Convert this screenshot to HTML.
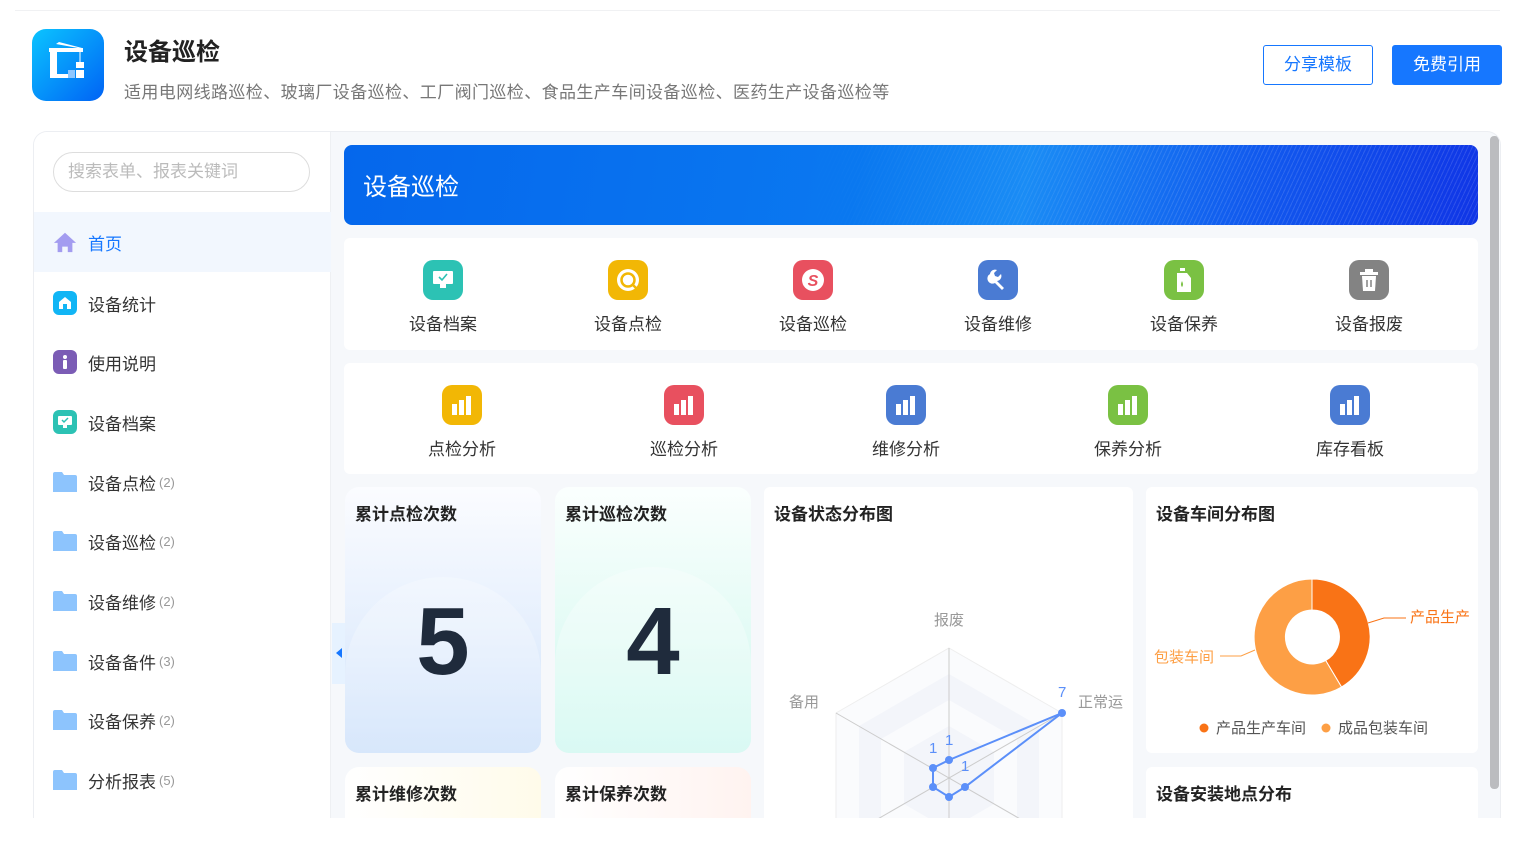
<!DOCTYPE html>
<html style="width:1528px;height:856px;overflow:hidden"><head><meta charset="utf-8"><style>
*{box-sizing:border-box;margin:0;padding:0}
body{width:1528px;height:856px;background:#fff;font-family:"Liberation Sans","Noto Sans CJK SC",sans-serif;position:relative;overflow:hidden;color:#333}
.abs{position:absolute}
.btn{position:absolute;top:45px;height:40px;width:110px;border-radius:3px;font-size:17px;text-align:center;line-height:38px}
.main{position:absolute;left:33px;top:131px;width:1468px;height:687px;border:1px solid #eceef2;border-bottom:none;border-radius:14px 14px 0 0;overflow:hidden;background:#f6f8fb}
.side{position:absolute;left:0;top:0;width:297px;height:100%;background:#fff;border-right:1px solid #eef0f3}
.item{position:absolute;left:0;width:297px;height:60px;display:flex;align-items:center;padding-left:19px;font-size:17px;color:#333}
.item .ic{width:24px;height:24px;border-radius:6px;margin-right:11px;display:flex;align-items:center;justify-content:center}
.cnt{color:#999;font-size:13px;margin-left:3px}
.card{position:absolute;background:#fff;border-radius:6px}
.g{position:absolute;width:120px;text-align:center;font-size:17px;color:#333}
.g .i{width:40px;height:40px;border-radius:10px;margin:0 auto 10px;display:flex;align-items:center;justify-content:center}
.ttl{position:absolute;left:10px;top:13px;font-size:17px;font-weight:bold;color:#222}
</style></head><body>
<div class="abs" style="left:15px;top:10px;width:1485px;height:1px;background:#f0f1f3"></div>
<div class="abs" style="left:32px;top:29px;width:72px;height:72px;border-radius:14px;background:linear-gradient(135deg,#0bc4ff,#0063f5)">
<svg width="72" height="72" viewBox="0 0 72 72"><g fill="#fff"><rect x="17" y="19" width="34" height="4"/><rect x="18" y="19" width="7" height="30"/><rect x="18" y="45" width="18" height="4"/><rect x="44" y="33" width="8" height="6"/><rect x="44" y="41" width="8" height="8"/><polygon points="24,15 27,13 50,19 46,19"/></g><rect x="36" y="41" width="7" height="8" fill="#8fc7ff"/><line x1="48" y1="23" x2="48" y2="33" stroke="#fff" stroke-width="1"/></svg></div>
<div class="abs" style="left:124px;top:32px;font-size:24px;font-weight:bold;color:#222">设备巡检</div>
<div class="abs" style="left:124px;top:78px;font-size:17px;letter-spacing:0.4px;color:#777;white-space:nowrap">适用电网线路巡检、玻璃厂设备巡检、工厂阀门巡检、食品生产车间设备巡检、医药生产设备巡检等</div>
<div class="btn" style="left:1263px;border:1px solid #1677ff;color:#1677ff;background:#fff">分享模板</div>
<div class="btn" style="left:1392px;background:#1677ff;color:#fff;border:1px solid #1677ff">免费引用</div>

<div class="main">
 <div class="side">
  <div class="abs" style="left:19px;top:20px;width:257px;height:40px;border:1px solid #ddd;border-radius:20px;font-size:17px;color:#bbb;line-height:38px;padding-left:14px">搜索表单、报表关键词</div>
  <div class="item" style="top:80px;background:#f2f7fe;color:#1677ff"><span class="ic"><svg width="26" height="26" viewBox="0 0 26 26"><path d="M13 3 L25 14 L21 14 L21 24 L16 24 L16 18 L10 18 L10 24 L5 24 L5 14 L1 14 Z" fill="#a39cf0"/></svg></span>首页</div>
  <div class="item" style="top:141px"><span class="ic" style="background:#11b5f5"><svg width="14" height="14" viewBox="0 0 14 14"><path d="M7 1 L13 6 L13 13 L1 13 L1 6 Z" fill="#fff"/><rect x="5" y="8" width="4" height="5" fill="#11b5f5"/></svg></span>设备统计</div>
  <div class="item" style="top:200px"><span class="ic" style="background:#7b5cb5"><svg width="6" height="14"><circle cx="3" cy="2" r="2" fill="#fff"/><rect x="1" y="5" width="4" height="9" rx="1" fill="#fff"/></svg></span>使用说明</div>
  <div class="item" style="top:260px"><span class="ic" style="background:#2cc2b4"><svg width="16" height="14"><rect x="1" y="1" width="14" height="9" rx="1" fill="#fff"/><rect x="6" y="10" width="4" height="3" fill="#fff"/><path d="M5 5 L7 7 L11 3" stroke="#2cc2b4" stroke-width="1.5" fill="none"/></svg></span>设备档案</div>
  <div class="item" style="top:320px"><span class="ic"><svg width="24" height="20"><path d="M0 2 Q0 0 2 0 L9 0 L11 3 L22 3 Q24 3 24 5 L24 20 L0 20Z" fill="#8dc4fd"/></svg></span>设备点检<span class="cnt">(2)</span></div>
  <div class="item" style="top:379px"><span class="ic"><svg width="24" height="20"><path d="M0 2 Q0 0 2 0 L9 0 L11 3 L22 3 Q24 3 24 5 L24 20 L0 20Z" fill="#8dc4fd"/></svg></span>设备巡检<span class="cnt">(2)</span></div>
  <div class="item" style="top:439px"><span class="ic"><svg width="24" height="20"><path d="M0 2 Q0 0 2 0 L9 0 L11 3 L22 3 Q24 3 24 5 L24 20 L0 20Z" fill="#8dc4fd"/></svg></span>设备维修<span class="cnt">(2)</span></div>
  <div class="item" style="top:499px"><span class="ic"><svg width="24" height="20"><path d="M0 2 Q0 0 2 0 L9 0 L11 3 L22 3 Q24 3 24 5 L24 20 L0 20Z" fill="#8dc4fd"/></svg></span>设备备件<span class="cnt">(3)</span></div>
  <div class="item" style="top:558px"><span class="ic"><svg width="24" height="20"><path d="M0 2 Q0 0 2 0 L9 0 L11 3 L22 3 Q24 3 24 5 L24 20 L0 20Z" fill="#8dc4fd"/></svg></span>设备保养<span class="cnt">(2)</span></div>
  <div class="item" style="top:618px"><span class="ic"><svg width="24" height="20"><path d="M0 2 Q0 0 2 0 L9 0 L11 3 L22 3 Q24 3 24 5 L24 20 L0 20Z" fill="#8dc4fd"/></svg></span>分析报表<span class="cnt">(5)</span></div>
 </div>
 <div class="abs" style="left:298px;top:491px;width:16px;height:61px;background:#e6f2ff;border-radius:0 3px 3px 0"><svg width="16" height="61"><polygon points="4,30 10,25 10,35" fill="#1677ff"/></svg></div>
 <div class="abs" style="left:310px;top:13px;width:1134px;height:80px;border-radius:8px;background:linear-gradient(100deg,#0567ec 0%,#0a78f0 45%,#1a8cf5 60%,#1159ee 80%,#1035e6 100%);overflow:hidden">
  <div class="abs" style="left:0;top:0;width:100%;height:100%;background:repeating-linear-gradient(115deg,rgba(255,255,255,0) 0 3px,rgba(255,255,255,.12) 3px 4px);-webkit-mask:linear-gradient(90deg,transparent 40%,#000 75%)"></div>
  <div class="abs" style="left:19px;top:22px;font-size:24px;color:#fff">设备巡检</div>
 </div>
 <div class="card" style="left:310px;top:106px;width:1134px;height:112px">
  <div class="g" style="left:39px;top:22px"><div class="i" style="background:#2cc2b4"><svg width="24" height="22"><rect x="2" y="2" width="20" height="13" rx="1" fill="#fff"/><rect x="9" y="15" width="6" height="4" fill="#fff"/><path d="M8 8 L11 11 L16 5" stroke="#2cc2b4" stroke-width="1.6" fill="none"/></svg></div>设备档案</div>
  <div class="g" style="left:224px;top:22px"><div class="i" style="background:#f2b705"><svg width="26" height="26"><circle cx="13" cy="13" r="11" fill="#fff"/><circle cx="13" cy="13" r="6.5" fill="none" stroke="#f2b705" stroke-width="2.5"/><line x1="17" y1="17" x2="21" y2="21" stroke="#f2b705" stroke-width="2.5"/></svg></div>设备点检</div>
  <div class="g" style="left:409px;top:22px"><div class="i" style="background:#e8505f"><svg width="26" height="26"><circle cx="13" cy="13" r="11" fill="#fff"/><text x="13" y="19" text-anchor="middle" font-size="16" font-weight="bold" font-style="italic" fill="#e8505f" font-family="Liberation Sans">S</text></svg></div>设备巡检</div>
  <div class="g" style="left:594px;top:22px"><div class="i" style="background:#4a7bd3"><svg width="26" height="26"><path d="M5 7 A5 5 0 0 1 12 3 L9 6 L10 9 L13 10 L16 7 A5 5 0 0 1 12 14 L19 21 L17 23 L10 16 A5 5 0 0 1 5 7Z" fill="#fff"/></svg></div>设备维修</div>
  <div class="g" style="left:780px;top:22px"><div class="i" style="background:#7ac143"><svg width="22" height="28"><rect x="7" y="2" width="5" height="3" fill="#fff"/><path d="M4 7 L14 7 L18 12 L18 26 L4 26Z" fill="#fff"/><path d="M9 15 Q7 19 9 21 Q11 19 9 15Z" fill="#7ac143"/></svg></div>设备保养</div>
  <div class="g" style="left:965px;top:22px"><div class="i" style="background:#838383"><svg width="24" height="26"><rect x="8" y="2" width="8" height="3" fill="#fff"/><rect x="3" y="5" width="18" height="3" fill="#fff"/><path d="M5 9 L19 9 L18 24 L6 24Z" fill="#fff"/><line x1="10" y1="13" x2="10" y2="20" stroke="#838383" stroke-width="1.5"/><line x1="14" y1="13" x2="14" y2="20" stroke="#838383" stroke-width="1.5"/></svg></div>设备报废</div>
 </div>
 <div class="card" style="left:310px;top:231px;width:1134px;height:111px">
  <div class="g" style="left:58px;top:22px"><div class="i" style="background:#f2b705"><svg width="24" height="22"><rect x="2" y="10" width="5" height="11" fill="#fff"/><rect x="9" y="6" width="5" height="15" fill="#fff"/><rect x="16" y="2" width="5" height="19" fill="#fff"/></svg></div>点检分析</div>
  <div class="g" style="left:280px;top:22px"><div class="i" style="background:#e8505f"><svg width="24" height="22"><rect x="2" y="10" width="5" height="11" fill="#fff"/><rect x="9" y="6" width="5" height="15" fill="#fff"/><rect x="16" y="2" width="5" height="19" fill="#fff"/></svg></div>巡检分析</div>
  <div class="g" style="left:502px;top:22px"><div class="i" style="background:#4a7bd3"><svg width="24" height="22"><rect x="2" y="10" width="5" height="11" fill="#fff"/><rect x="9" y="6" width="5" height="15" fill="#fff"/><rect x="16" y="2" width="5" height="19" fill="#fff"/></svg></div>维修分析</div>
  <div class="g" style="left:724px;top:22px"><div class="i" style="background:#7ac143"><svg width="24" height="22"><rect x="2" y="10" width="5" height="11" fill="#fff"/><rect x="9" y="6" width="5" height="15" fill="#fff"/><rect x="16" y="2" width="5" height="19" fill="#fff"/></svg></div>保养分析</div>
  <div class="g" style="left:946px;top:22px"><div class="i" style="background:#4a7bd3"><svg width="24" height="22"><rect x="2" y="10" width="5" height="11" fill="#fff"/><rect x="9" y="6" width="5" height="15" fill="#fff"/><rect x="16" y="2" width="5" height="19" fill="#fff"/></svg></div>库存看板</div>
 </div>
 <div class="card" style="left:311px;top:355px;width:196px;height:266px;border-radius:14px;background:linear-gradient(180deg,#fbfcff,#e5effd 55%,#cadffa);overflow:hidden">
  <div class="abs" style="left:0;top:90px;width:196px;height:300px;border-radius:100px 100px 0 0;background:rgba(255,255,255,.25)"></div>
  <div class="ttl">累计点检次数</div>
  <div class="abs" style="left:0;top:95px;width:196px;text-align:center;font-size:96px;font-weight:bold;color:#1f2b3c;line-height:120px">5</div>
 </div>
 <div class="card" style="left:521px;top:355px;width:196px;height:266px;border-radius:14px;background:linear-gradient(180deg,#fbfffe,#e3fbf5 55%,#c9f7ee);overflow:hidden">
  <div class="abs" style="left:0;top:80px;width:196px;height:300px;border-radius:100px 100px 0 0;background:rgba(255,255,255,.3)"></div>
  <div class="ttl">累计巡检次数</div>
  <div class="abs" style="left:0;top:95px;width:196px;text-align:center;font-size:96px;font-weight:bold;color:#1f2b3c;line-height:120px">4</div>
 </div>
 <div class="card" style="left:311px;top:635px;width:196px;height:100px;border-radius:14px;background:linear-gradient(90deg,#fff,#fffbea)"><div class="ttl">累计维修次数</div></div>
 <div class="card" style="left:521px;top:635px;width:196px;height:100px;border-radius:14px;background:linear-gradient(90deg,#fff,#fff3f0)"><div class="ttl">累计保养次数</div></div>
 <div class="card" style="left:730px;top:355px;width:369px;height:400px;overflow:hidden"><div class="ttl">设备状态分布图</div>
  <svg class="abs" style="left:0;top:0" width="369" height="400" viewBox="764 487 369 400">
   <g stroke="none">
    <polygon points="949,648 1062,713 1062,843 949,908 836,843 836,713" fill="#fafbfd" stroke="#eee"/>
    <polygon points="949,674 1039,726 1039,830 949,882 859,830 859,726" fill="#f3f5fa"/>
    <polygon points="949,700 1017,739 1017,817 949,856 881,817 881,739" fill="#fafbfd"/>
    <polygon points="949,726 994,752 994,804 949,830 904,804 904,752" fill="#f3f5fa"/>
   </g>
   <g stroke="#ccc" stroke-width="1"><line x1="949" y1="648" x2="949" y2="908"/><line x1="836" y1="713" x2="1062" y2="843"/><line x1="1062" y1="713" x2="836" y2="843"/></g>
   <polygon points="949,760 1062,713 965,787 949,797 933,787 933,768" fill="none" stroke="#5b8ff9" stroke-width="2"/>
   <g fill="#5b8ff9"><circle cx="949" cy="760" r="4"/><circle cx="1062" cy="713" r="4"/><circle cx="965" cy="787" r="4"/><circle cx="949" cy="797" r="4"/><circle cx="933" cy="787" r="4"/><circle cx="933" cy="768" r="4"/></g>
   <g font-size="15" fill="#5b8ff9" font-family="Liberation Sans"><text x="1058" y="697">7</text><text x="945" y="745">1</text><text x="929" y="753">1</text><text x="961" y="771">1</text></g>
   <g font-size="15" fill="#999" font-family="Liberation Sans,Noto Sans CJK SC"><text x="934" y="625">报废</text><text x="789" y="707">备用</text><text x="1078" y="707">正常运</text></g>
  </svg>
 </div>
 <div class="card" style="left:1112px;top:355px;width:332px;height:266px"><div class="ttl">设备车间分布图</div>
  <svg class="abs" style="left:0;top:0" width="332" height="266" viewBox="1146 487 332 266">
   <path d="M1312 579 A58 58 0 0 1 1341.5 687 L1325.7 660.5 A27 27 0 0 0 1312 610 Z" fill="#f97316" stroke="#fff"/>
   <path d="M1341.5 687 A58 58 0 1 1 1312 579 L1312 610 A27 27 0 1 0 1325.7 660.5 Z" fill="#fd9f45" stroke="#fff"/>
   <polyline points="1368,623 1384,618 1406,618" fill="none" stroke="#f97316"/>
   <polyline points="1255,650 1241,656 1220,656" fill="none" stroke="#fd9f45"/>
   <g font-size="15" font-family="Liberation Sans,Noto Sans CJK SC"><text x="1410" y="622" fill="#f97316">产品生产</text><text x="1154" y="662" fill="#fd9f45">包装车间</text>
   <circle cx="1204" cy="728" r="4.5" fill="#f97316"/><text x="1216" y="733" fill="#555">产品生产车间</text>
   <circle cx="1326" cy="728" r="4.5" fill="#fd9f45"/><text x="1338" y="733" fill="#555">成品包装车间</text></g>
  </svg>
 </div>
 <div class="card" style="left:1112px;top:635px;width:332px;height:100px"><div class="ttl">设备安装地点分布</div></div>
 <div class="abs" style="left:1456px;top:4px;width:9px;height:653px;background:#bbbcbf;border-radius:4px"></div>
</div>
</body></html>
